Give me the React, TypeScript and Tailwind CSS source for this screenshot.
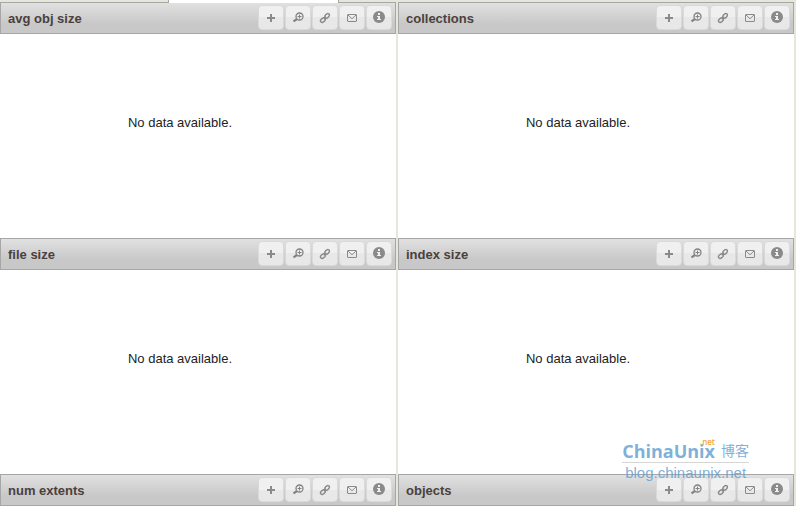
import type { ReactNode } from 'react'

const rows = [
  ['avg obj size', 'collections'],
  ['file size', 'index size'],
  ['num extents', 'objects'],
]

function PlusIcon() {
  return (
    <svg width="16" height="16" viewBox="0 0 16 16" fill="#8b8a8b" aria-hidden="true">
      <path d="M7 4h2v3h3v2H9v3H7V9H4V7h3z" />
    </svg>
  )
}

function ZoomIcon() {
  return (
    <svg width="16" height="16" viewBox="0 0 16 16" fill="none" stroke="#838283" aria-hidden="true">
      <circle cx="9.5" cy="6.5" r="3.5" strokeWidth="1.3" />
      <path d="M7.5 6.5h4M9.5 4.5v4" strokeWidth="1" />
      <path d="M7 9L3.5 11.3" strokeWidth="2.2" />
    </svg>
  )
}

function LinkIcon() {
  return (
    <svg width="16" height="16" viewBox="0 0 16 16" fill="none" stroke="#8b8a8b" aria-hidden="true">
      <ellipse cx="10.1" cy="5.9" rx="2.7" ry="1.8" strokeWidth="1.4" transform="rotate(-50 10.1 5.9)" />
      <ellipse cx="5.9" cy="10.1" rx="2.7" ry="1.8" strokeWidth="1.4" transform="rotate(-40 5.9 10.1)" />
      <path d="M6.8 9.2l2.4-2.4" strokeWidth="1.4" />
    </svg>
  )
}

function MailIcon() {
  return (
    <svg width="16" height="16" viewBox="0 0 16 16" fill="none" stroke="#8b8a8b" aria-hidden="true">
      <rect x="3.5" y="4.5" width="9" height="7" rx="0.5" />
      <path d="M4 5l4 3.7L12 5" />
    </svg>
  )
}

function InfoIcon() {
  return (
    <svg width="16" height="16" viewBox="0 0 16 16" aria-hidden="true">
      <circle cx="8" cy="7" r="6" fill="#8b8a8b" />
      <path d="M7 3h2v2H7zM6 6h3v3h1v1H6V9h1V7H6z" fill="#f0f0f0" />
    </svg>
  )
}

function ToolButton({ label, children }: { label: string; children: ReactNode }) {
  return (
    <button
      type="button"
      aria-label={label}
      className="flex h-[25px] w-[26px] items-start justify-center rounded border border-[#dadada] bg-linear-to-b from-[#f0f0f0] from-50% to-[#e8e8e8] to-50% pt-1"
    >
      {children}
    </button>
  )
}

function PanelHeader({ title }: { title: string }) {
  return (
    <header className="flex h-8 items-center justify-between border border-[#a6a6a6] bg-linear-to-b from-[#e1e1e1] to-[#c8c8c8] to-70% pr-[3px] pl-[7px]">
      <h2 className="pt-0.5 text-[13px] leading-4 font-bold text-[#4b403c]">{title}</h2>
      <div className="flex gap-px self-start pt-0.5">
        <ToolButton label="Add"><PlusIcon /></ToolButton>
        <ToolButton label="Zoom"><ZoomIcon /></ToolButton>
        <ToolButton label="Link"><LinkIcon /></ToolButton>
        <ToolButton label="Email"><MailIcon /></ToolButton>
        <ToolButton label="Info"><InfoIcon /></ToolButton>
      </div>
    </header>
  )
}

function Watermark() {
  return (
    <div className="pointer-events-none absolute right-[47px] bottom-[23px] text-[#5b9bcf]/80">
      <div className="flex items-end gap-1.5 border-b border-[#d6d6d6] leading-[22px]">
        <span className="relative font-['Open_Sans',sans-serif] text-[18px] font-bold">
          ChinaUnix
          <span className="absolute -top-1 right-0 text-[8px] leading-3 font-semibold text-[#f5a640]">.net</span>
        </span>
        <span className="font-['Liberation_Sans','Noto_Sans_CJK_SC',sans-serif] text-[14px]">博客</span>
      </div>
      <div className="pl-[3px] text-[15px] leading-5">blog.chinaunix.net</div>
    </div>
  )
}

export default function App() {
  return (
    <div className="relative bg-[#e6e6da] font-['Liberation_Sans',Arial,sans-serif]">
      {/* Bottom edge of the active tab */}
      <div className="relative z-10 -mb-px h-[3px] pl-[168px]">
        <div className="h-full w-[171px] border-x border-[#a6a6a6] bg-white" />
      </div>
      <main className="grid grid-cols-2 gap-x-0.5 pr-0.5">
        {rows.map((row, index) =>
          row.map((title) => (
            <section key={title} className="bg-white">
              <PanelHeader title={title} />
              {index < rows.length - 1 && (
                <div className="h-51 pt-[81px] pr-9 text-center text-[13px] leading-4 text-[#222]">
                  No data available.
                </div>
              )}
            </section>
          )),
        )}
      </main>
      <Watermark />
    </div>
  )
}
